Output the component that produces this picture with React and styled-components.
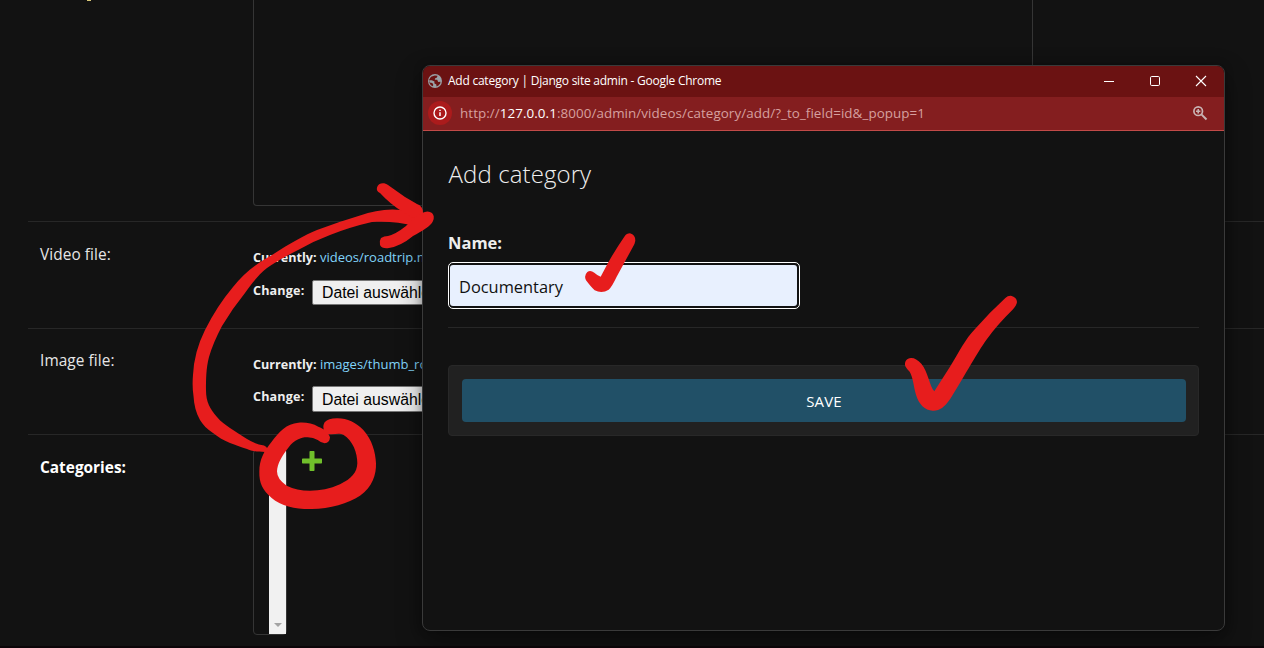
import React from "react";
import styled, { createGlobalStyle } from "styled-components";

const Global = createGlobalStyle`
  * { box-sizing: border-box; }
  body { margin: 0; background: #121212; overflow: hidden; }
`;

const sans = `"Open Sans", "Noto Sans", sans-serif`;

const Page = styled.main`
  position: relative;
  width: 1264px;
  height: 648px;
  overflow: hidden;
  background: #121212;
  color: #eee;
  font-family: ${sans};
  border-bottom: 2px solid #0b0508;
`;

const Form = styled.form`
  display: flex;
  flex-direction: column;
  margin-left: 28px;
`;

const Row = styled.div`
  display: flex;
  height: ${(p) => p.$h}px;
  padding-left: 12px;
  border-bottom: ${(p) => (p.$last ? "0" : "1px solid #272727")};
`;

const Label = styled.label`
  width: 213px;
  flex: none;
  padding-top: ${(p) => p.$top}px;
  font-size: 15.4px;
  line-height: 22px;
  font-weight: ${(p) => (p.$bold ? 700 : 400)};
  letter-spacing: ${(p) => (p.$bold ? 0 : 0.08)}px;
  color: ${(p) => (p.$bold ? "#fff" : "#e6e6e6")};
`;

const ClippedMark = styled.i`
  width: 4px;
  height: 1px;
  margin-left: 47px;
  margin-right: 162px;
  background: #d9c878;
`;

const TextArea = styled.div`
  width: 780px;
  height: 206px;
  border: 1px solid #353535;
  border-top: 0;
  border-radius: 0 0 4px 4px;
`;

const FileField = styled.div`
  display: flex;
  flex-direction: column;
  padding-top: ${(p) => p.$top}px;
`;

const FileLine = styled.div`
  display: flex;
  height: ${(p) => p.$h}px;
  font-size: 13px;
  line-height: 20px;
  white-space: nowrap;
  color: #eee;
`;

const Strong = styled.b`
  width: ${(p) => p.$w}px;
  padding-top: ${(p) => p.$drop || 0}px;
  font-size: 12.6px;
  letter-spacing: ${(p) => p.$track || 0}px;
`;

const Link = styled.a`
  margin-top: -1px;
  color: #81d4fa;
`;

const FileButton = styled.button`
  height: ${(p) => p.$h}px;
  width: 140px;
  padding: 0 0 0 9px;
  border: 1px solid #767676;
  border-radius: 2px;
  background: #efefef;
  color: #000;
  text-align: left;
  font: 15.8px "Liberation Sans", Arial, sans-serif;
  line-height: ${(p) => p.$line}px;
`;

const ListBox = styled.div`
  display: flex;
  align-items: stretch;
  justify-content: flex-end;
  width: 34px;
  height: 186px;
  margin-top: 14px;
  border: 1px solid #353535;
  border-radius: 4px;
`;

const ScrollTrack = styled.div`
  display: flex;
  align-items: flex-end;
  justify-content: center;
  width: 17px;
  padding-bottom: 7px;
  background: #f1f1f1;
`;

const AddIcon = styled.svg`
  width: 20px;
  height: 20px;
  margin: 16px 0 0 14.5px;
`;

const Window = styled.section`
  position: absolute;
  left: 422px;
  top: 65px;
  width: 803px;
  height: 566px;
  display: flex;
  flex-direction: column;
  border: 1px solid #3a3a3a;
  border-radius: 8px;
  overflow: hidden;
  background: #121212;
  box-shadow: 0 10px 26px rgba(0, 0, 0, 0.4), 0 0 8px rgba(0, 0, 0, 0.25);
`;

const TitleBar = styled.header`
  display: flex;
  align-items: center;
  height: 31px;
  padding: 0 17px 2px 5px;
  background: #6b1212;
  color: #fff;
`;

const Title = styled.span`
  flex: 1;
  margin-left: 6px;
  font-size: 12px;
  line-height: 20px;
  letter-spacing: -0.24px;
  white-space: nowrap;
`;

const Controls = styled.div`
  display: flex;
  gap: 34px;
`;

const AddressBar = styled.div`
  display: flex;
  align-items: center;
  height: 34px;
  padding: 0 15px 2px 5px;
  background: #841e1f;
  border-bottom: 1px solid #c24a48;
`;

const InfoBadge = styled.span`
  display: flex;
  align-items: center;
  justify-content: center;
  width: 24px;
  height: 24px;
  border-radius: 50%;
  background: #ab1b1c;
`;

const Url = styled.span`
  flex: 1;
  margin-left: 8px;
  font-size: 13.4px;
  line-height: 22px;
  letter-spacing: 0.07px;
  white-space: nowrap;
  color: #d6a09f;
`;

const Host = styled.span`
  color: #fff;
`;

const Body = styled.div`
  display: flex;
  flex-direction: column;
  padding: 26px 25px 0;
`;

const Heading = styled.h1`
  margin: 0;
  height: 34px;
  padding-left: 0.6px;
  font-size: 24px;
  line-height: 34px;
  font-weight: 300;
  color: #eee;
  letter-spacing: 0.1px;
`;

const FieldRow = styled.div`
  display: flex;
  flex-direction: column;
  align-items: flex-start;
  height: 137px;
  padding-top: 40px;
  border-bottom: 1px solid #272727;
`;

const FieldLabel = styled.label`
  height: 31px;
  font-size: 16.5px;
  line-height: 24px;
  font-weight: 700;
  color: #eee;
`;

const FocusRing = styled.div`
  width: 352px;
  height: 47px;
  padding: 2px 2px 2px 1px;
  border: 1px solid #fff;
  border-radius: 5px;
`;

const Field = styled.div`
  height: 41px;
  padding-left: 9px;
  border-radius: 3px;
  background: #e8f0fe;
  color: #111;
  font-size: 16.4px;
  line-height: 43px;
`;

const SubmitRow = styled.div`
  display: flex;
  height: 71px;
  margin-top: 37px;
  padding: 13px 12px 13px 13px;
  border: 1px solid #282828;
  border-radius: 4px;
  background: #212121;
`;

const Save = styled.button`
  flex: 1;
  height: 43px;
  border: 0;
  padding: 1px 0 0;
  border-radius: 4px;
  background: #215067;
  color: #fff;
  font: 400 15px/42px ${sans};
  letter-spacing: 0.1px;
`;

const Ink = styled.svg`
  position: absolute;
  inset: 0;
  width: 1264px;
  height: 648px;
  fill: #e71d1d;
  pointer-events: none;
`;

function FileRow({ height, label, labelTop, gap, file, buttonHeight, buttonLine }) {
  return (
    <Row $h={height}>
      <Label $top={labelTop}>{label}</Label>
      <FileField $top={26}>
        <FileLine $h={gap}>
          <Strong $w={67}>Currently:</Strong>
          <Link>{file}</Link>
        </FileLine>
        <FileLine $h={25}>
          <Strong $w={59} $drop={1} $track={0.15}>Change:</Strong>
          <FileButton type="button" $h={buttonHeight} $line={buttonLine}>Datei auswählen</FileButton>
        </FileLine>
      </FileField>
    </Row>
  );
}

export default function App() {
  return (
    <Page>
      <Global />
      <Form>
        <Row $h={222}>
          <ClippedMark />
          <TextArea />
        </Row>
        <FileRow height={107} label="Video file:" labelTop={22} gap={32} file="videos/roadtrip.mp4" buttonHeight={25} buttonLine={23} />
        <FileRow height={106} label="Image file:" labelTop={21} gap={31} file="images/thumb_roadtrip.jpg" buttonHeight={26} buttonLine={25} />
        <Row $h={213} $last>
          <Label $top={22} $bold>Categories:</Label>
          <ListBox>
            <ScrollTrack>
              <svg width="8" height="4" viewBox="0 0 8 4"><path d="M0 0H8L4 4Z" fill="#a3a3a3" /></svg>
            </ScrollTrack>
          </ListBox>
          <AddIcon viewBox="0 0 20 20">
            <path d="M8.2 0h3.6q.7 0 .7.7V7.5h6.800q.7 0 .7.7v3.600q0 .7-.7.7H12.500v6.800q0 .7-.7.7H8.200q-.7 0-.7-.7V12.500H.7q-.7 0-.7-.7V8.200q0-.7.7-.7H7.500V.7q0-.7.7-.7Z" fill="#70bf2b" />
          </AddIcon>
        </Row>
      </Form>

      <Window>
        <TitleBar>
          <svg width="14" height="14" viewBox="0 0 14 14">
            <circle cx="7" cy="7" r="7" fill="#9aa0a6" />
            <path d="M6.800 1.500 9.500 1.800 9 3.600 7.200 4.200 6.800 5.800H9.200L10.200 8 12.500 7.800 12.200 9.500 10.500 11.500 8.500 12.500 8.300 10.500 6.300 9.300 6.500 7.500 3.800 6.300 1.400 6.300 1.600 8.500 4.300 8.900 5.200 10.500 5 12.300 2.800 11.300 1.200 8.500 1.200 5.500 3 2.800Z" fill="#6b1212" />
          </svg>
          <Title>Add category | Django site admin - Google Chrome</Title>
          <Controls>
            <svg width="12" height="12" viewBox="0 0 12 12"><path d="M1 6.500H11" stroke="#fff" /></svg>
            <svg width="12" height="12" viewBox="0 0 12 12"><rect x="1.500" y="1.500" width="9" height="9" rx="1.200" fill="none" stroke="#fff" /></svg>
            <svg width="12" height="12" viewBox="0 0 12 12"><path d="M1 1 11 11M11 1 1 11" stroke="#fff" strokeWidth="1.100" /></svg>
          </Controls>
        </TitleBar>
        <AddressBar>
          <InfoBadge>
            <svg width="14" height="14" viewBox="0 0 14 14">
              <circle cx="7" cy="7" r="6" fill="none" stroke="#fff" strokeWidth="1.400" />
              <path d="M7 6.200V10M7 3.700V5.100" stroke="#fff" strokeWidth="1.500" />
            </svg>
          </InfoBadge>
          <Url>http://<Host>127.0.0.1</Host>:8000/admin/videos/category/add/?_to_field=id&amp;_popup=1</Url>
          <svg width="18" height="18" viewBox="0 0 18 18" fill="none" stroke="#c9b3b3">
            <circle cx="7.200" cy="7.200" r="4.300" strokeWidth="1.700" />
            <path d="M10.400 10.400 15.500 15.500" strokeWidth="2" />
            <path d="M7.200 5V9.400M5 7.200H9.400" strokeWidth="1.600" />
          </svg>
        </AddressBar>
        <Body>
          <Heading>Add category</Heading>
          <FieldRow>
            <FieldLabel>Name:</FieldLabel>
            <FocusRing><Field>Documentary</Field></FocusRing>
          </FieldRow>
          <SubmitRow><Save type="button">SAVE</Save></SubmitRow>
        </Body>
      </Window>

      <Ink viewBox="0 0 1264 648">
        <path d="M265 452C258 452 251 451 247 449C240 447 236 445 230 443C223 440 218 437 213 433C207 429 203 425 200 420C196 413 194 405 193.500 396Q192 386 193 375Q194 352 205 330Q217 306 233 287C244 273 256 264 272 255C290 243 305 235 317 230Q338 222 360 215.500C376 210 394 207 410 212L424 216 416 226C400 222 385 221 372 222Q350 227 330 235 314 241 300 249 280 259 267 268C257 276 250 286 245 293Q232 309 222 326 213 343 209 357C206 368 206 380 206 390C206 402 210 409 217 417C221 422 226 425 230 428Q239 434 247 439 255 444 264 445.500 268 447 267 450 266.500 452 265 452Z" />
        <path d="M388 185 405 197 417 204Q423 206 423 213C421 218 416 219 411 217L403 212Q390 204 380 193 376 191 377 187.500C378 183 384 182 388 185Z" />
        <path d="M381 238Q384 236 388 236 396 234 406 226 413 218 422 213 428 210 432 213 435 216 433 221C431 226 422 231 413 236Q401 246 389 248 382 249 380 245 379 241 381 238Z" />
        <g transform="translate(180 400) scale(.33333)">
          <path d="M450 112C446 96 430 86 415 80C398 69 373 66 355 68C320 70 296 97 275 125C252 153 238 178 238 215C237 249 248 270 275 294C303 319 350 328 395 327C450 326 505 310 540 287C578 261 589 223 588 190C587 158 576 118 550 90C527 67 500 54 470 55Q445 55 434 67C427 78 429 94 443 101C457 107 476 97 490 104C519 122 532 158 532 190C531 218 515 236 480 253C450 267 420 272 390 272Q350 272 320 257 291 238 291 214C292 190 306 168 325 143C345 117 367 111 383 112Q400 113 413 120 424 129 434 130 449 129 450 112Z" />
        </g>
        <g transform="translate(430 220) scale(.33333)">
          <path d="M583 50Q590 40 600 40 616 44 616 62 615 72 607 84L560 170Q546 200 536 209 516 222 494 211 483 201 468 181 461 167 472 156 481 149 493 158 503 167 512 170L535 127Q558 86 583 50Z" />
        </g>
        <g transform="translate(780 280) scale(.33333)">
          <path d="M676 54Q684 46 693 47 710 51 711 66 710 76 697 90 651 135 621 177C590 219 544 306 510 358C492 383 479 393 458 392C435 391 416 372 408 344C401 321 399 291 389 275Q380 267 376 259C372 246 380 234 393 234Q407 233 424 251C444 274 449 321 463 334L510 260C536 218 558 174 583 149Q628 98 676 54Z" />
        </g>
      </Ink>
    </Page>
  );
}
